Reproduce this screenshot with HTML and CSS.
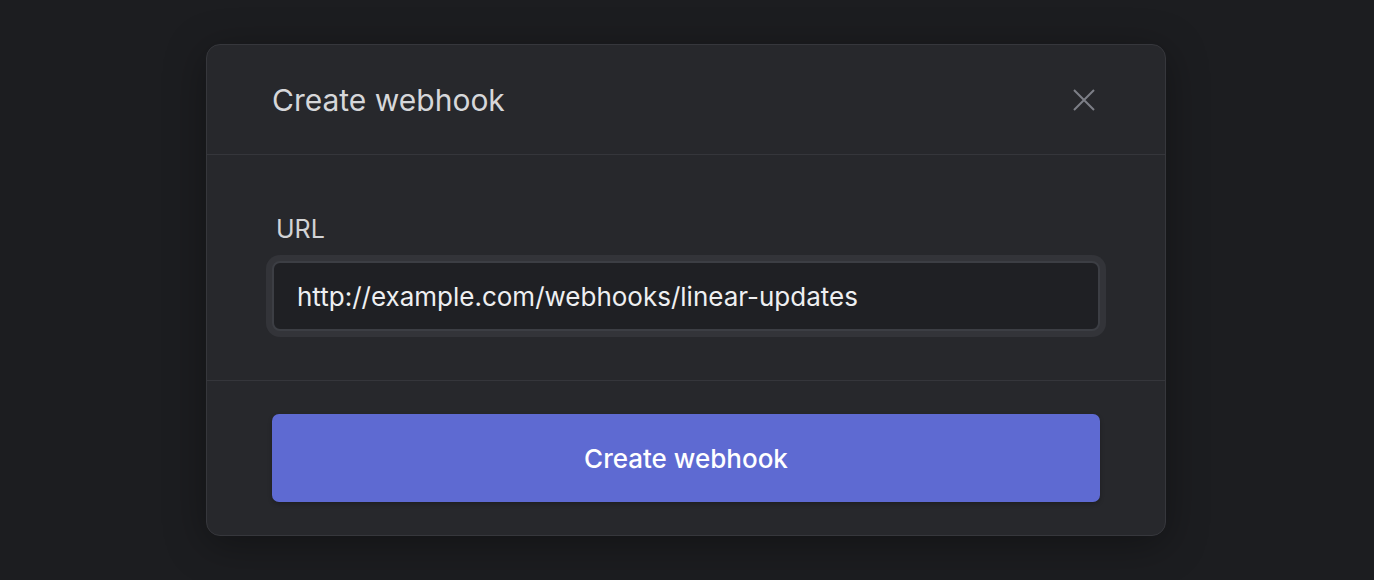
FILE: index.html
```html
<!DOCTYPE html>
<html lang="en">
<head>
<meta charset="utf-8">
<title>Create webhook</title>
<link rel="stylesheet" href="styles.css">
</head>
<body>
<div class="page">
  <div class="modal">
    <div class="modal-header">
      <h2 class="modal-title">Create webhook</h2>
      <button class="close-btn" aria-label="Close">
        <svg width="22" height="22" viewBox="0 0 22 22" fill="none" stroke="currentColor" stroke-width="2" stroke-linecap="butt">
          <path d="M1 1L21 21M21 1L1 21"/>
        </svg>
      </button>
    </div>
    <div class="modal-body">
      <label class="field-label" for="url">URL</label>
      <input id="url" class="text-input" type="text" value="http://example.com/webhooks/linear-updates">
    </div>
    <div class="modal-footer">
      <button class="primary-btn">Create webhook</button>
    </div>
  </div>
</div>
</body>
</html>
```

FILE: styles.css
```css
* { box-sizing: border-box; }
html, body {
  margin: 0;
  padding: 0;
  background: #1c1d20;
  font-family: Inter, "Noto Sans", sans-serif;
}
.page {
  width: 1374px;
  height: 580px;
  display: flex;
  justify-content: flex-start;
  padding: 44px 0 0 206px;
}
.modal {
  width: 960px;
  height: 492px;
  background: #27282c;
  border: 1px solid #36373c;
  border-radius: 14px;
  box-shadow: 0 8px 40px rgba(0, 0, 0, 0.35);
  display: flex;
  flex-direction: column;
}
.modal-header {
  height: 110px;
  flex: none;
  display: flex;
  align-items: center;
  justify-content: space-between;
  padding: 0 65px;
  border-bottom: 1px solid #35363b;
}
.modal-title {
  margin: 0;
  font-size: 30px;
  font-weight: 400;
  color: #d6d7da;
}
.close-btn {
  background: none;
  border: none;
  padding: 0;
  width: 22px;
  height: 22px;
  color: #7d7f87;
  margin-right: 5px;
  display: flex;
}
.modal-body {
  height: 226px;
  flex: none;
  padding: 59px 65px 0;
  border-bottom: 1px solid #35363b;
  display: flex;
  flex-direction: column;
}
.field-label {
  font-size: 25px;
  color: #d2d3d6;
  margin-left: 4px;
  line-height: 30px;
  margin-bottom: 17px;
}
.text-input {
  width: 100%;
  height: 70px;
  background: #1f2024;
  border: 2px solid #3c3e44;
  border-radius: 8px;
  box-shadow: 0 0 0 6px #333439;
  color: #eeeff1;
  font-family: Inter, "Noto Sans", sans-serif;
  font-size: 26px;
  padding: 0 23px;
  outline: none;
}
.modal-footer {
  flex: 1;
  padding: 33px 65px;
  display: flex;
}
.primary-btn {
  width: 100%;
  height: 88px;
  background: #5e6ad2;
  border: none;
  border-radius: 7px;
  color: #ffffff;
  font-family: Inter, "Noto Sans", sans-serif;
  font-size: 26px;
  font-weight: 500;
  box-shadow: 0 2px 4px rgba(0, 0, 0, 0.25);
}
```
